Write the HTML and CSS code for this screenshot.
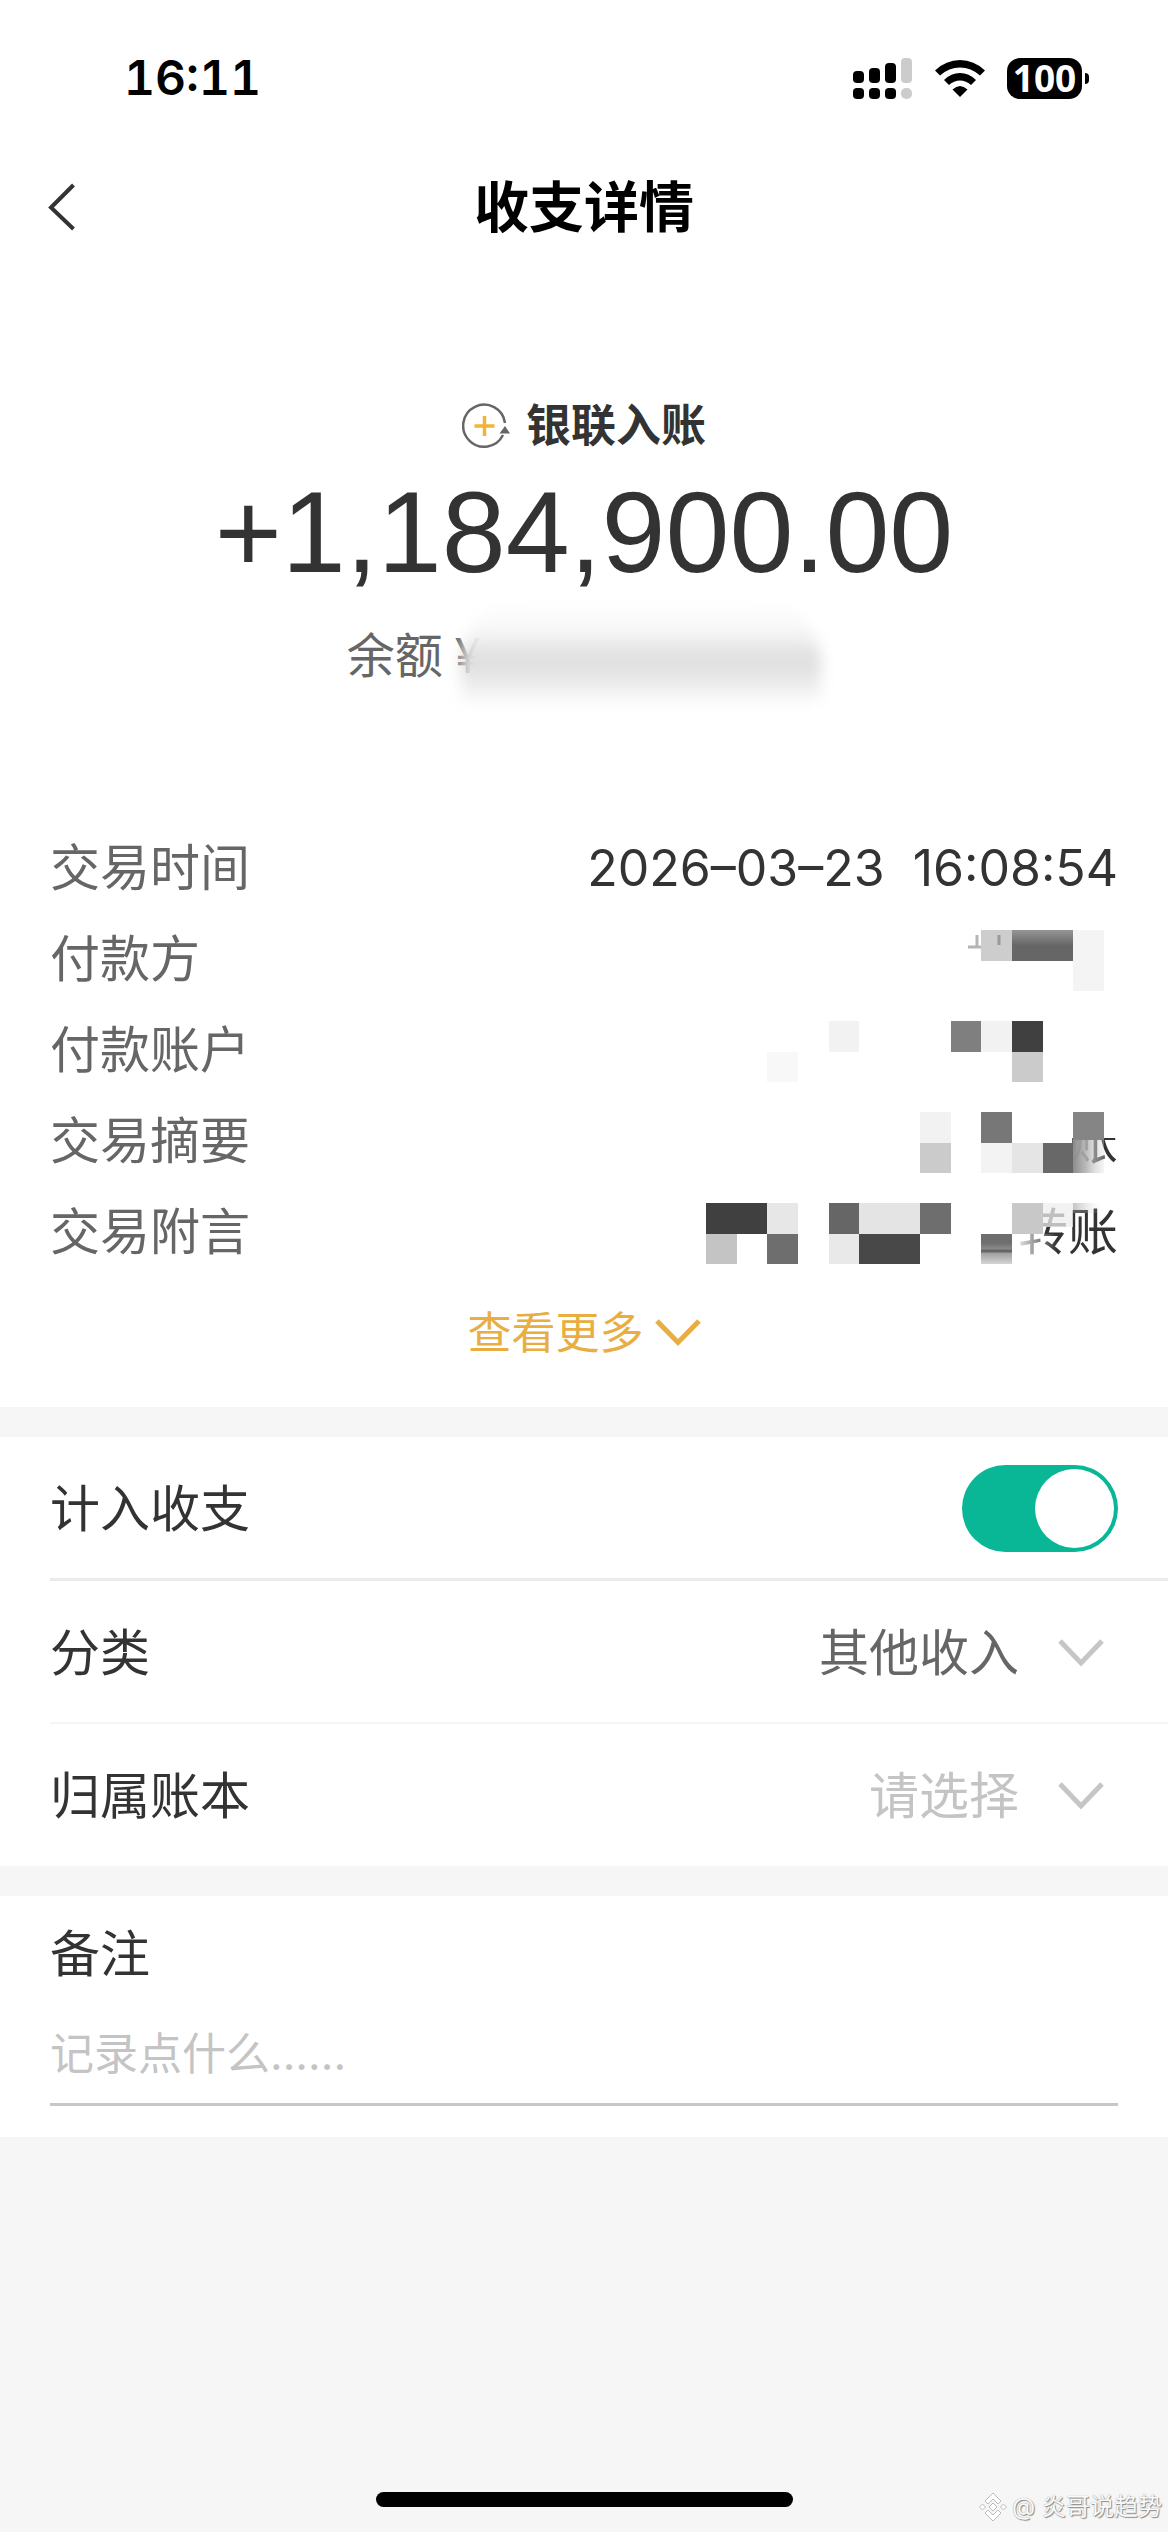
FILE: index.html
```html
<!DOCTYPE html>
<html lang="zh-CN">
<head>
<meta charset="utf-8">
<meta name="viewport" content="width=device-width, initial-scale=1">
<title>收支详情</title>
<link rel="stylesheet" href="styles.css">
</head>
<body>
<div class="status">
  <time class="clock">16:11</time>
  <div class="status-icons">
    <svg class="signal" width="60" height="41" viewBox="0 0 60 41" aria-hidden="true">
      <rect x="0" y="13" width="11" height="12" rx="4"/><rect x="16" y="10" width="11" height="15" rx="4"/><rect x="32" y="5" width="11" height="20" rx="4"/>
      <rect x="0" y="30" width="11" height="11" rx="4"/><rect x="16" y="30" width="11" height="11" rx="4"/><rect x="32" y="30" width="11" height="11" rx="4"/>
      <g fill="#ccc"><rect x="48" y="0" width="11" height="25" rx="4"/><rect x="48" y="30" width="11" height="11" rx="5"/></g>
    </svg>
    <svg class="wifi" width="50" height="37" viewBox="0 0 50 37" aria-hidden="true">
      <path d="M0 10.500Q11 0 25 0T50 10.500L45 15.500Q36 7.500 25 7.500T5 15.500Z"/>
      <path d="M9 20Q16 13 25 13T41 20L36 25Q31 20.500 25 20.500T14 25Z"/>
      <path d="M17.500 29.500Q25 22.500 32.500 29.500L25 37Z"/>
    </svg>
    <div class="battery">100</div>
  </div>
</div>

<header class="header">
  <button class="back" type="button" aria-label="返回">
    <svg width="28" height="48" viewBox="0 0 28 48" aria-hidden="true"><path d="M25.500 2 3 24.500 25.500 46" fill="none" stroke="#333" stroke-width="4"/></svg>
  </button>
  <h1 class="title">收支详情</h1>
</header>

<main>
  <section class="panel summary">
    <div class="kind">
      <svg width="48" height="46" viewBox="0 0 48 46" fill="none" aria-hidden="true">
        <path d="M43 20A21 21 0 1 0 41 32" stroke="#666" stroke-width="2.500"/>
        <path d="M37.500 30.500 43 23 48 30.500Z" fill="#666"/>
        <path d="M22.500 13V33M12.500 23H32.500" stroke="#f0b43c" stroke-width="3.500"/>
      </svg>
      <span>银联入账</span>
    </div>
    <p class="amount">+1,184,900.00</p>
    <p class="balance"><span>余额</span><span class="yen">¥</span><span class="smudge"></span></p>

    <dl class="details">
      <div class="detail"><dt>交易时间</dt><dd>2026–03–23&nbsp; 16:08:54</dd></div>
      <div class="detail"><dt>付款方</dt><dd class="masked">
        <svg class="mosaic" width="412" height="61" viewBox="0 0 412 61" aria-hidden="true">
          <defs><linearGradient id="fade" x2="0" y2="1"><stop offset="0" stop-color="#959595"/><stop offset=".5" stop-color="#666"/></linearGradient></defs>
          <path d="M262 17H275M271 5V17" stroke="#b5b5b5" stroke-width="3"/>
          <rect x="275" width="31" height="31" fill="#cdcdcd"/><path d="M293 5V15" stroke="#999" stroke-width="3"/>
          <rect x="306" width="61" height="31" fill="url(#fade)"/>
          <rect x="367" width="31" height="61" fill="#f4f4f4"/>
        </svg></dd></div>
      <div class="detail"><dt>付款账户</dt><dd class="masked">
        <svg class="mosaic" width="412" height="61" viewBox="0 0 412 61" aria-hidden="true">
          <rect x="61" y="31" width="31" height="30" fill="#f8f8f8"/><rect x="123" width="30" height="31" fill="#f2f2f2"/>
          <rect x="245" width="30" height="31" fill="#7f7f7f"/><rect x="275" width="31" height="31" fill="#f2f2f2"/>
          <rect x="306" width="31" height="31" fill="#404040"/><rect x="306" y="31" width="31" height="30" fill="#cbcbcb"/>
        </svg></dd></div>
      <div class="detail"><dt>交易摘要</dt><dd class="masked">账
        <svg class="mosaic" width="412" height="61" viewBox="0 0 412 61" aria-hidden="true">
          <defs><linearGradient id="wipe"><stop offset="0" stop-color="#8c8c8c"/><stop offset=".4" stop-color="#b0b0b0" stop-opacity=".9"/><stop offset="1" stop-color="#ddd" stop-opacity=".3"/></linearGradient></defs>
          <rect x="361" width="51" height="26" fill="#fff"/>
          <rect x="214" width="31" height="31" fill="#f2f2f2"/><rect x="214" y="31" width="31" height="30" fill="#cbcbcb"/>
          <rect x="275" width="31" height="31" fill="#777"/><rect x="275" y="31" width="31" height="30" fill="#f3f3f3"/>
          <rect x="306" y="31" width="31" height="30" fill="#e5e5e5"/><rect x="337" y="31" width="30" height="30" fill="#686868"/>
          <rect x="367" width="31" height="28" fill="#858585"/><rect x="367" y="28" width="31" height="33" fill="url(#wipe)"/>
        </svg></dd></div>
      <div class="detail"><dt>交易附言</dt><dd class="masked">转账
        <svg class="mosaic" width="412" height="61" viewBox="0 0 412 61" aria-hidden="true">
          <defs>
            <linearGradient id="drop" x2="0" y2="1"><stop offset=".3" stop-color="#6e6e6e"/><stop offset="1" stop-color="#d5d5d5"/></linearGradient>
            <linearGradient id="veil"><stop offset="0" stop-color="#fff"/><stop offset="1" stop-color="#fff" stop-opacity="0"/></linearGradient>
            <linearGradient id="edge"><stop offset="0" stop-color="#888" stop-opacity=".5"/><stop offset="1" stop-color="#eee" stop-opacity="0"/></linearGradient>
          </defs>
          <rect width="61" height="31" fill="#404040"/><rect x="61" width="31" height="31" fill="#e7e7e7"/>
          <rect y="31" width="31" height="30" fill="#c4c4c4"/><rect x="61" y="31" width="31" height="30" fill="#6e6e6e"/>
          <rect x="123" width="30" height="31" fill="#666"/><rect x="153" width="61" height="31" fill="#e4e4e4"/><rect x="214" width="31" height="31" fill="#6e6e6e"/>
          <rect x="123" y="31" width="30" height="30" fill="#e9e9e9"/><rect x="153" y="31" width="61" height="30" fill="#484848"/>
          <rect x="306" width="31" height="31" fill="#c8c8c8"/><rect x="306" y="31" width="45" height="30" fill="url(#veil)"/>
          <rect x="337" width="30" height="24" fill="#eee" fill-opacity=".75"/><rect x="367" width="31" height="10" fill="url(#edge)"/>
          <rect x="275" y="31" width="31" height="30" fill="url(#drop)"/><path d="M275 48H306" stroke="#666" stroke-width="3"/>
        </svg></dd></div>
    </dl>

    <button class="more" type="button">查看更多
      <svg width="46" height="28" viewBox="0 0 46 28" aria-hidden="true"><path d="M2 2 23 23.500 44 2" fill="none" stroke="currentColor" stroke-width="5"/></svg>
    </button>
  </section>

  <section class="panel settings">
    <div class="setting">
      <label for="count">计入收支</label>
      <input class="switch" id="count" type="checkbox" role="switch" checked>
    </div>
    <div class="setting">
      <label for="category">分类</label>
      <div class="picker">
        <select id="category"><option>其他收入</option></select>
        <svg width="46" height="28" viewBox="0 0 46 28" aria-hidden="true"><path d="M2 2 23 24 44 2" fill="none" stroke="#c6c6c6" stroke-width="5"/></svg>
      </div>
    </div>
    <div class="setting">
      <label for="book">归属账本</label>
      <div class="picker">
        <select class="empty" id="book"><option>请选择</option></select>
        <svg width="46" height="28" viewBox="0 0 46 28" aria-hidden="true"><path d="M2 2 23 24 44 2" fill="none" stroke="#c6c6c6" stroke-width="5"/></svg>
      </div>
    </div>
  </section>

  <section class="panel note">
    <label for="note">备注</label>
    <input id="note" type="text" placeholder="记录点什么......">
  </section>
</main>

<footer class="footer">
  <div class="home-bar"></div>
  <div class="watermark">
    <svg width="28" height="30" viewBox="0 0 28 30" aria-hidden="true">
      <g fill="#fff" stroke="#bbb" stroke-width="1"><path d="M14 1 22 9 19 12 14 7 9 12 6 9Z"/><path d="M14 29 22 21 19 18 14 23 9 18 6 21Z"/><path d="M14 11 18 15 14 19 10 15Z"/><path d="M3.500 12 6.500 15 3.500 18 .5 15Z"/><path d="M24.500 12 27.500 15 24.500 18 21.500 15Z"/></g>
    </svg>
    <span>@ 炎哥说趋势</span>
  </div>
</footer>
</body>
</html>
```
FILE: styles.css
```css
* { box-sizing: border-box; }

body {
  margin: 0;
  min-height: 100vh;
  display: flex;
  flex-direction: column;
  background: #f6f6f6;
  color: #333;
  font: 50px/60px Inter, "Noto Sans CJK SC", sans-serif;
}

p, h1, dl, dd { margin: 0; }
svg { display: block; flex: none; }
button, input, select { font: inherit; color: inherit; background: none; border: 0; border-radius: 0; padding: 0; margin: 0; }

/* Status bar */
.status {
  height: 156px;
  padding: 0 86px 0 124px;
  display: flex;
  align-items: center;
  justify-content: space-between;
  background: #fff;
  color: #000;
}
.clock { font-size: 48px; font-weight: 600; font-variant-numeric: tabular-nums; }
.status-icons { display: flex; align-items: center; gap: 22px; }
.battery {
  position: relative;
  width: 75px;
  height: 41px;
  border-radius: 13px;
  background: #000;
  color: #fff;
  font: bold 37px/39px "Open Sans", sans-serif;
  text-align: center;
}
.battery::after {
  content: "";
  position: absolute;
  left: 78px;
  top: 15px;
  width: 4px;
  height: 11px;
  border-radius: 0 4px 4px 0;
  background: #000;
}

/* Title bar */
.header {
  height: 102px;
  padding: 0 48px;
  display: grid;
  grid-template-columns: 1fr auto 1fr;
  align-items: center;
  background: #fff;
}
.title { font-size: 55px; font-weight: 700; color: #000; }

.panel { background: #fff; margin-bottom: 30px; }

/* Amount and details */
.summary {
  padding: 138px 50px 44px;
  display: flex;
  flex-direction: column;
  align-items: center;
}
.kind { display: flex; align-items: center; gap: 16px; font-size: 45px; font-weight: 700; }
.amount {
  margin-top: 16px;
  font-family: "Liberation Sans", sans-serif;
  font-size: 115px;
  line-height: 120px;
}
.balance {
  margin-top: 34px;
  display: flex;
  font-size: 48px;
  color: #666;
}
.yen { margin-left: 12px; }
.smudge {
  width: 360px;
  height: 100px;
  margin: -24px 0 -16px -20px;
  border-radius: 60px 60px 0 0;
  background: linear-gradient(#fff, #f6f6f6 30%, #dfdfdf 55%, #e2e2e2 68%, #fafafa);
  filter: blur(7px);
}
.details { width: 100%; margin-top: 136px; }
.detail { height: 91px; display: flex; align-items: center; justify-content: space-between; }
.detail dt { color: #666; }
.masked { position: relative; min-height: 60px; }
.mosaic { position: absolute; right: 0; top: 1px; }
.more { margin-top: 26px; display: flex; align-items: center; gap: 11px; font-size: 44px; color: #e9ae42; }

/* Settings */
.settings { padding-left: 50px; }
.setting {
  height: 143px;
  padding: 2px 50px 0 0;
  display: flex;
  align-items: center;
  justify-content: space-between;
  border-bottom: 2px solid #f5f5f5;
}
.setting:first-child { height: 144px; border-bottom: 3px solid #ebebeb; }
.setting:last-child { height: 142px; border: 0; }
.switch {
  appearance: none;
  width: 156px;
  height: 87px;
  padding: 4px;
  border-radius: 44px;
  background: #ccc;
}
.switch::before {
  content: "";
  display: block;
  width: 79px;
  height: 79px;
  border-radius: 50%;
  background: #fff;
}
.switch:checked { background: #09b796; }
.switch:checked::before { margin-left: auto; }
.picker { display: flex; align-items: center; gap: 39px; padding-right: 14px; color: #666; }
.picker select { appearance: none; }
.picker .empty { color: #c4c4c4; }

/* Note */
.note { padding: 28px 50px 31px; margin-bottom: 0; }
.note label { display: block; }
.note input {
  display: block;
  width: 100%;
  height: 94px;
  margin-top: 28px;
  padding-bottom: 8px;
  font-size: 44px;
  border-bottom: 3px solid #c8c8c8;
  outline: 0;
}
.note input::placeholder { color: #c4c4c4; opacity: 1; }

/* Bottom of the screen */
.footer {
  margin-top: auto;
  padding-bottom: 10px;
  display: grid;
  grid-template-columns: 1fr 417px 1fr;
  align-items: start;
}
.home-bar { grid-column: 2; height: 15px; border-radius: 8px; background: #000; }
.watermark {
  justify-self: end;
  padding-right: 6px;
  display: flex;
  align-items: center;
  gap: 5px;
  font-size: 24px;
  line-height: 30px;
  color: #fafafa;
  text-shadow: 1px 1px 1px #888, 0 0 1px #888;
}
```
